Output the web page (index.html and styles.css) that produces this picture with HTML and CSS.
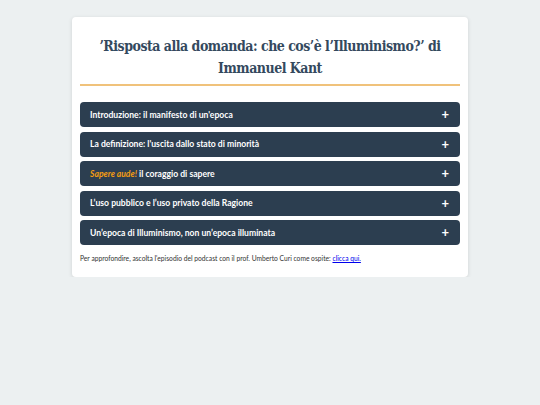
FILE: index.html
```html
<!DOCTYPE html>
<html lang="it">
<head>
<meta charset="utf-8">
<link rel="stylesheet" href="styles.css">
</head>
<body>
<div class="card">
  <h1 class="title">’Risposta alla domanda: che cos’è l’Illuminismo?’ di Immanuel Kant</h1>
  <div class="accordion">
    <div class="item"><span class="label">Introduzione: il manifesto di un'epoca</span><span class="plus">+</span></div>
    <div class="item"><span class="label">La definizione: l'uscita dallo stato di minorità</span><span class="plus">+</span></div>
    <div class="item"><span class="label"><em class="accent">Sapere aude!</em> il coraggio di sapere</span><span class="plus">+</span></div>
    <div class="item"><span class="label">L’uso pubblico e l’uso privato della Ragione</span><span class="plus">+</span></div>
    <div class="item"><span class="label">Un’epoca di Illuminismo, non un’epoca illuminata</span><span class="plus">+</span></div>
  </div>
  <p class="note">Per approfondire, ascolta l'episodio del podcast con il prof. Umberto Curi come ospite: <a href="#" class="link">clicca qui.</a></p>
</div>
</body>
</html>
```
FILE: styles.css
```css
html, body {
  margin: 0;
  padding: 0;
  background: #ecf0f1;
  font-family: Lato, "Open Sans", sans-serif;
}
.card {
  box-sizing: border-box;
  width: 396px;
  margin: 17px auto 0;
  background: #ffffff;
  border-radius: 4px;
  box-shadow: 0 1px 4px rgba(0, 0, 0, 0.12);
  padding: 18px 8px 15px;
}
.title {
  margin: 0;
  font-family: "DejaVu Serif", "Liberation Serif", serif;
  font-stretch: condensed;
  font-size: 14px;
  letter-spacing: -0.5px;
  line-height: 22px;
  font-weight: bold;
  color: #34495e;
  text-align: center;
  padding: 0 0 5px;
  border-bottom: 2px solid #f0c27b;
}
.accordion {
  display: flex;
  flex-direction: column;
  gap: 4.5px;
  margin-top: 16px;
}
.item {
  display: flex;
  align-items: center;
  justify-content: space-between;
  height: 25px;
  box-sizing: border-box;
  padding: 0 11px 0 10px;
  background: #2c3e50;
  border-radius: 4px;
  color: #ffffff;
  font-size: 8.6px;
  font-weight: bold;
}
.accent {
  color: #f39c12;
  font-style: italic;
}
.plus {
  font-size: 13px;
  font-weight: bold;
  line-height: 1;
}
.note {
  margin: 9px 0 0;
  font-size: 6.7px;
  color: #333333;
}
.link {
  color: #0000ee;
  text-decoration: underline;
}
```
